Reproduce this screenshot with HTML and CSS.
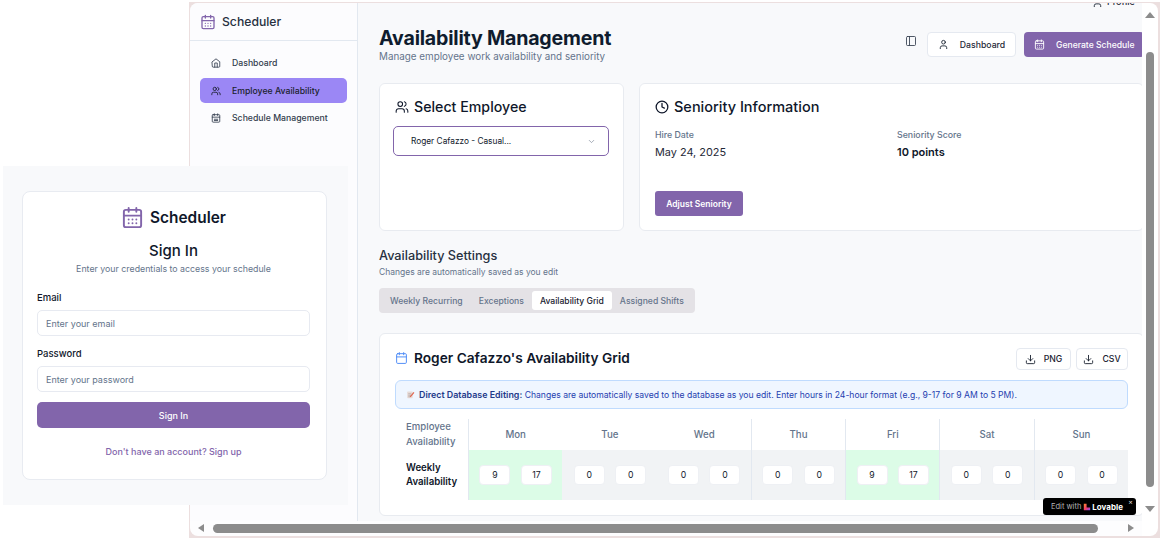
FILE: index.html
```html
<!DOCTYPE html>
<html lang="en">
<head>
<meta charset="utf-8">
<title>Scheduler</title>
<link rel="stylesheet" href="styles.css">
</head>
<body>
<svg class="sprite" aria-hidden="true">
  <symbol id="i-cal-days" viewBox="0 0 24 24"><rect x="3" y="4" width="18" height="18" rx="2"/><path d="M16 2v4M8 2v4M3 10h18M8 14h.01M12 14h.01M16 14h.01M8 18h.01M12 18h.01M16 18h.01"/></symbol>
  <symbol id="i-cal" viewBox="0 0 24 24"><rect x="3" y="4" width="18" height="18" rx="2"/><path d="M16 2v4M8 2v4M3 10h18"/></symbol>
  <symbol id="i-cal-lines" viewBox="0 0 24 24"><rect x="3" y="4" width="18" height="18" rx="2"/><path d="M16 2v4M8 2v4M3 10h18M8 15h8M8 18h8"/></symbol>
  <symbol id="i-home" viewBox="0 0 24 24"><path d="m3 9 9-7 9 7v11a2 2 0 0 1-2 2H5a2 2 0 0 1-2-2z"/><path d="M9 22V12h6v10"/></symbol>
  <symbol id="i-users" viewBox="0 0 24 24"><path d="M16 21v-2a4 4 0 0 0-4-4H6a4 4 0 0 0-4 4v2"/><circle cx="9" cy="7" r="4"/><path d="M22 21v-2a4 4 0 0 0-3-3.87M16 3.13a4 4 0 0 1 0 7.75"/></symbol>
  <symbol id="i-user" viewBox="0 0 24 24"><path d="M19 21v-2a4 4 0 0 0-4-4H9a4 4 0 0 0-4 4v2"/><circle cx="12" cy="7" r="4"/></symbol>
  <symbol id="i-panel" viewBox="0 0 24 24"><rect x="3" y="3" width="18" height="18" rx="2"/><path d="M9 3v18"/></symbol>
  <symbol id="i-download" viewBox="0 0 24 24"><path d="M21 15v4a2 2 0 0 1-2 2H5a2 2 0 0 1-2-2v-4"/><path d="m7 10 5 5 5-5M12 15V3"/></symbol>
  <symbol id="i-clock" viewBox="0 0 24 24"><circle cx="12" cy="12" r="10"/><path d="M12 6v6l4 2"/></symbol>
  <symbol id="i-chevron" viewBox="0 0 24 24"><path d="m6 9 6 6 6-6"/></symbol>
</svg>

<div class="app-window">
  <div class="app-body">
    <aside class="sidebar">
      <div class="brand">
        <svg class="icon brand-icon"><use href="#i-cal-days"/></svg>
        <span>Scheduler</span>
      </div>
      <nav class="nav">
        <a class="nav-item"><svg class="icon nav-icon"><use href="#i-home"/></svg>Dashboard</a>
        <a class="nav-item nav-item-active"><svg class="icon nav-icon"><use href="#i-users"/></svg>Employee Availability</a>
        <a class="nav-item"><svg class="icon nav-icon"><use href="#i-cal-lines"/></svg>Schedule Management</a>
      </nav>
    </aside>

    <main class="main">
      <div class="content">
        <div class="profile-row">
          <svg class="icon profile-icon"><use href="#i-user"/></svg>
          <span>Profile</span>
        </div>

        <header class="page-header">
          <div class="page-heading">
            <h1>Availability Management</h1>
            <p>Manage employee work availability and seniority</p>
          </div>
          <div class="header-actions">
            <svg class="icon panel-icon"><use href="#i-panel"/></svg>
            <button class="btn btn-outline btn-dash"><svg class="icon btn-icon"><use href="#i-user"/></svg>Dashboard</button>
            <button class="btn btn-primary btn-gen"><svg class="icon btn-icon"><use href="#i-cal-days"/></svg>Generate Schedule</button>
          </div>
        </header>

        <section class="cards">
          <div class="card card-select">
            <h2 class="card-title card-title-select"><svg class="icon title-icon"><use href="#i-users"/></svg>Select Employee</h2>
            <div class="select">
              <span>Roger Cafazzo - Casual...</span>
              <svg class="icon chevron"><use href="#i-chevron"/></svg>
            </div>
          </div>
          <div class="card card-seniority">
            <h2 class="card-title"><svg class="icon title-icon title-icon-clock"><use href="#i-clock"/></svg>Seniority Information</h2>
            <div class="facts">
              <div>
                <div class="fact-label">Hire Date</div>
                <div class="fact-value">May 24, 2025</div>
              </div>
              <div>
                <div class="fact-label">Seniority Score</div>
                <div class="fact-value fact-strong">10 points</div>
              </div>
            </div>
            <button class="btn btn-primary btn-adjust">Adjust Seniority</button>
          </div>
        </section>

        <section class="settings">
          <h3>Availability Settings</h3>
          <p>Changes are automatically saved as you edit</p>
          <div class="tabs">
            <span class="tab">Weekly Recurring</span>
            <span class="tab">Exceptions</span>
            <span class="tab tab-active">Availability Grid</span>
            <span class="tab">Assigned Shifts</span>
          </div>
        </section>

        <section class="card grid-card">
          <div class="grid-head">
            <h2 class="grid-title"><svg class="icon grid-title-icon"><use href="#i-cal"/></svg>Roger Cafazzo's Availability Grid</h2>
            <div class="grid-actions">
              <button class="btn btn-outline btn-export"><svg class="icon btn-icon"><use href="#i-download"/></svg>PNG</button>
              <button class="btn btn-outline btn-export"><svg class="icon btn-icon"><use href="#i-download"/></svg>CSV</button>
            </div>
          </div>
          <div class="notice">
            <svg class="memo" viewBox="0 0 12 12"><rect x="1.5" y="2" width="7.5" height="9" rx="1" fill="#e8dcd8"/><path d="M3 5h4M3 7h4M3 9h3" stroke="#a89a9a" stroke-width=".8"/><path d="M5.5 8 10 2.5l1.2 1L6.8 9 5 9.6z" fill="#e0654f"/></svg>
            <span><b>Direct Database Editing:</b> Changes are automatically saved to the database as you edit. Enter hours in 24-hour format (e.g., 9-17 for 9 AM to 5 PM).</span>
          </div>
          <div class="avail">
            <div class="avail-corner">Employee Availability</div>
            <div class="day">Mon</div>
            <div class="day day-plain">Tue</div>
            <div class="day day-plain">Wed</div>
            <div class="day">Thu</div>
            <div class="day">Fri</div>
            <div class="day">Sat</div>
            <div class="day">Sun</div>

            <div class="avail-label">Weekly Availability</div>
            <div class="slot slot-on"><span class="hour">9</span><span class="hour">17</span></div>
            <div class="slot slot-plain"><span class="hour">0</span><span class="hour">0</span></div>
            <div class="slot slot-plain"><span class="hour">0</span><span class="hour">0</span></div>
            <div class="slot"><span class="hour">0</span><span class="hour">0</span></div>
            <div class="slot slot-on"><span class="hour">9</span><span class="hour">17</span></div>
            <div class="slot"><span class="hour">0</span><span class="hour">0</span></div>
            <div class="slot"><span class="hour">0</span><span class="hour">0</span></div>
          </div>
        </section>
      </div>
    </main>
  </div>

  <div class="vscroll">
    <span class="arrow arrow-up"></span>
    <span class="vthumb"></span>
    <span class="arrow arrow-down"></span>
  </div>
  <div class="hscroll">
    <span class="arrow arrow-left"></span>
    <span class="hthumb"></span>
    <span class="arrow arrow-right"></span>
  </div>
  <div class="scroll-corner"></div>
</div>

<div class="badge">
  <span class="badge-edit">Edit with</span>
  <svg class="badge-logo" viewBox="0 0 10 10"><defs><linearGradient id="lov" x1="0" y1="0" x2="1" y2="1"><stop offset="0" stop-color="#ff8a2b"/><stop offset=".55" stop-color="#f0386b"/><stop offset="1" stop-color="#7a4dff"/></linearGradient></defs><path d="M1 1h3.5v4.5H9V9H1z" fill="url(#lov)"/></svg>
  <span class="badge-name">Lovable</span>
  <span class="badge-close">×</span>
</div>

<div class="login-window">
  <div class="login-card">
    <div class="login-brand">
      <svg class="icon login-logo"><use href="#i-cal-days"/></svg>
      <span>Scheduler</span>
    </div>
    <h2 class="login-title">Sign In</h2>
    <p class="login-sub">Enter your credentials to access your schedule</p>
    <div class="field">
      <div class="field-label">Email</div>
      <div class="field-input">Enter your email</div>
    </div>
    <div class="field">
      <div class="field-label">Password</div>
      <div class="field-input">Enter your password</div>
    </div>
    <button class="btn btn-primary btn-signin">Sign In</button>
    <a class="login-link">Don't have an account? Sign up</a>
  </div>
</div>
</body>
</html>
```
FILE: styles.css
```css
* { box-sizing: border-box; }
html, body { margin: 0; height: 100%; }
body {
  position: relative;
  width: 1162px;
  height: 538px;
  overflow: hidden;
  background: #fff;
  font-family: Inter, "Liberation Sans", sans-serif;
  color: #0f172a;
}
.sprite { display: none; }
h1, h2, h3, p { margin: 0; }
button { font-family: inherit; cursor: pointer; }

.icon {
  fill: none;
  stroke: currentColor;
  stroke-width: 2;
  stroke-linecap: round;
  stroke-linejoin: round;
  flex: none;
}

/* Desktop windows */
.app-window {
  position: absolute;
  left: 189px;
  top: 2px;
  width: 971px;
  height: 536px;
  background: #ecdfdf;
  padding: 1px 2px 2px 1px;
  display: grid;
  grid-template-columns: 952px 16px;
  grid-template-rows: 518px 15px;
}
.app-body {
  display: flex;
  overflow: hidden;
  background: #f8f9fb;
  border-top-left-radius: 8px;
}

/* Sidebar */
.sidebar {
  width: 168px;
  flex: none;
  background: #fcfcfe;
  border-right: 1px solid #e2e8f0;
}
.brand {
  height: 38px;
  display: flex;
  align-items: center;
  gap: 6px;
  padding-left: 10px;
  border-bottom: 1px solid #e2e8f0;
  font-size: 12.2px;
  font-weight: 500;
  color: #27303f;
}
.brand-icon { width: 16px; height: 16px; color: #8265ab; }
.nav {
  display: flex;
  flex-direction: column;
  gap: 2.5px;
  padding: 9.5px 10px;
}
.nav-item {
  height: 25px;
  display: flex;
  align-items: center;
  gap: 11px;
  padding-left: 11px;
  border-radius: 5px;
  font-size: 8.7px;
  font-weight: 500;
  color: #333c4d;
}
.nav-item-active { background: #9b87f5; color: #1a1f2c; }
.nav-icon { width: 10px; height: 10px; }

/* Main */
.main {
  flex: 1;
  min-width: 0;
  overflow: hidden;
  padding-left: 21px;
}
.content { width: 765px; }
.profile-row {
  height: 12px;
  margin-top: -8px;
  margin-bottom: 20px;
  padding-left: 713px;
  display: flex;
  align-items: center;
  gap: 4px;
  font-size: 9px;
  font-weight: 500;
  color: #1f2937;
}
.profile-icon { width: 11px; height: 11px; margin-top: 2px; }

.page-header {
  height: 56px;
  display: flex;
  justify-content: space-between;
  align-items: flex-start;
}
.page-heading h1 {
  font-size: 19.6px;
  line-height: 22px;
  font-weight: 700;
  letter-spacing: -.2px;
  color: #0f1c2e;
}
.page-heading p {
  font-size: 9.85px;
  line-height: 14px;
  color: #64748b;
}
.header-actions {
  display: flex;
  align-items: center;
  margin-top: 5px;
}
.panel-icon { width: 12px; height: 12px; margin-right: 10.5px; margin-top: -8px; color: #3c4656; stroke-width: 1.8; }

.btn {
  display: inline-flex;
  align-items: center;
  justify-content: center;
  border-radius: 4px;
  border: 1px solid transparent;
  font-size: 8.7px;
  font-weight: 500;
  padding: 0;
}
.btn-primary { background: #8265ab; color: #fff; }
.btn-outline { background: #fff; border-color: #e5e9f0; color: #1f2937; }
.btn-icon { width: 11px; height: 11px; }
.btn-dash { width: 89px; height: 25px; gap: 11px; margin-right: 8px; }
.btn-gen { width: 120px; height: 25px; gap: 11px; font-size: 8.6px; justify-content: flex-start; padding-left: 9px; }

/* Cards */
.card {
  background: #fff;
  border: 1px solid #e8ebf0;
  border-radius: 6px;
}
.cards {
  display: grid;
  grid-template-columns: 245px 505px;
  gap: 15px;
  height: 148px;
}
.card-select { padding: 13px 13px; }
.card-title {
  display: flex;
  align-items: center;
  gap: 5px;
  height: 19px;
  font-size: 14.2px;
  font-weight: 500;
  color: #0f172a;
}
.card-title-select { margin-left: 2px; }
.title-icon { width: 14px; height: 14px; stroke-width: 1.8; }
.title-icon-clock { width: 14px; height: 14px; stroke-width: 2.2; }
.select {
  margin-top: 10px;
  width: 216px;
  height: 30px;
  display: flex;
  align-items: center;
  justify-content: space-between;
  padding: 0 12px 0 17px;
  border: 1px solid #8265ab;
  border-radius: 5px;
  font-size: 8.3px;
  color: #0f172a;
}
.chevron { width: 9px; height: 9px; color: #8a93a2; }

.card-seniority { padding: 13px 15px; display: flex; flex-direction: column; }
.card-seniority .card-title { font-size: 14.5px; }
.facts {
  display: grid;
  grid-template-columns: 242px 1fr;
  margin-top: 13px;
}
.fact-label { font-size: 8.8px; line-height: 12px; font-weight: 500; color: #64748b; }
.fact-value { margin-top: 4px; font-size: 10.9px; line-height: 14px; color: #1f2937; }
.fact-strong { font-weight: 600; font-size: 11px; color: #0f172a; }
.btn-adjust { margin-top: 32px; width: 88px; height: 25px; font-weight: 600; font-size: 8.5px; border-radius: 3px; flex: none; }

/* Settings */
.settings { padding-top: 16px; }
.settings h3 { font-size: 12.7px; line-height: 18px; font-weight: 500; color: #27303f; }
.settings p { font-size: 8.5px; line-height: 14px; color: #64748b; }
.tabs {
  display: inline-flex;
  margin-top: 9px;
  height: 25px;
  padding: 3px;
  background: #e4e2e6;
  border-radius: 4px;
}
.tab {
  display: flex;
  align-items: center;
  padding: 0 8px;
  font-size: 8.6px;
  font-weight: 500;
  color: #64748b;
  border-radius: 3px;
}
.tab-active { background: #fff; color: #1a2230; }

/* Grid card */
.grid-card {
  margin-top: 20px;
  height: 183px;
  padding: 14px 15px;
  background: #fff;
}
.grid-head {
  display: flex;
  justify-content: space-between;
  align-items: center;
  height: 22px;
}
.grid-title {
  display: flex;
  align-items: center;
  gap: 6px;
  padding-bottom: 2px;
  font-size: 13.7px;
  font-weight: 600;
  color: #0f172a;
}
.grid-title-icon { width: 13px; height: 14px; color: #4f8df7; stroke-width: 1.8; }
.grid-actions { display: flex; gap: 5px; }
.btn-export { width: 55px; height: 22px; gap: 8px; border-radius: 4px; font-size: 8.7px; color: #1a2230; }
.btn-export + .btn-export { width: 52px; }

.notice {
  margin-top: 10px;
  height: 29px;
  display: flex;
  align-items: center;
  gap: 4px;
  padding-left: 10px;
  background: #eff6ff;
  border: 1px solid #bfdbfe;
  border-radius: 6px;
  font-size: 8.6px;
  color: #1e40af;
  white-space: nowrap;
}
.notice b { font-weight: 600; font-size: 8.9px; color: #1e3a8a; }
.memo { width: 9px; height: 9px; flex: none; }

.avail {
  margin-top: 10px;
  display: grid;
  grid-template-columns: 73px repeat(7, 1fr);
  grid-template-rows: 31px 50px;
}
.avail-corner {
  padding-left: 11px;
  display: flex;
  align-items: center;
  font-size: 9.6px;
  line-height: 14.5px;
  font-weight: 500;
  color: #64748b;
}
.avail-label {
  padding-left: 11px;
  display: flex;
  align-items: center;
  font-size: 9.7px;
  line-height: 14.5px;
  font-weight: 600;
  color: #0f172a;
}
.day {
  display: flex;
  align-items: center;
  justify-content: center;
  font-size: 9.7px;
  font-weight: 500;
  color: #64748b;
  border-left: 1px solid #e2e8f0;
}
.day-plain { border-left-color: transparent; }
.slot {
  display: flex;
  align-items: center;
  justify-content: center;
  gap: 10.5px;
  background: #f1f3f5;
  border-left: 1px solid #e2e8f0;
}
.slot-plain { border-left-color: transparent; }
.slot-on { background: #dcfce7; }
.hour {
  width: 31px;
  height: 20px;
  display: flex;
  align-items: center;
  justify-content: center;
  background: #fff;
  border: 1px solid #eef0f4;
  border-radius: 4px;
  font-size: 8.7px;
  color: #0f172a;
}

/* Scrollbars */
.vscroll {
  position: relative;
  background: #fff;
  border-top-right-radius: 8px;
}
.hscroll {
  position: relative;
  background: #fdfdfe;
  border-bottom-left-radius: 8px;
}
.scroll-corner { background: #fff; border-bottom-right-radius: 8px; }
.arrow { position: absolute; width: 0; height: 0; border-style: solid; border-color: transparent; }
.arrow-up { left: 3px; top: 9px; border-width: 0 5px 6px; border-bottom-color: #8c8c8c; }
.arrow-down { left: 3px; top: 503px; border-width: 6px 5px 0; border-top-color: #8c8c8c; }
.arrow-left { left: 8px; top: 3px; border-width: 4px 6px 4px 0; border-right-color: #8c8c8c; }
.arrow-right { left: 938px; top: 3px; border-width: 4px 0 4px 6px; border-left-color: #8c8c8c; }
.vthumb { position: absolute; left: 4px; top: 49px; width: 8px; height: 435px; border-radius: 4px; background: #8c8c8c; }
.hthumb { position: absolute; left: 23px; top: 3px; width: 885px; height: 9px; border-radius: 4.5px; background: #8c8c8c; }

/* Overlay badge */
.badge {
  position: absolute;
  left: 1043px;
  top: 498px;
  width: 93px;
  height: 17px;
  display: flex;
  align-items: center;
  padding-left: 8px;
  background: #000;
  border-radius: 3px;
  font-size: 7.5px;
  white-space: nowrap;
}
.badge-edit { color: #b5b5b5; }
.badge-logo { width: 8px; height: 8px; margin: 0 1px 0 2px; }
.badge-name { color: #fff; font-weight: 700; font-size: 8px; }
.badge-close { position: absolute; right: 3px; top: 0; color: #ddd; font-size: 7px; line-height: 8px; }

/* Login window */
.login-window {
  position: absolute;
  left: 3px;
  top: 166px;
  width: 345px;
  height: 339px;
  padding: 25px 19px;
  background: #f8f9fb;
}
.login-card {
  width: 305px;
  height: 289px;
  padding: 15px 16px 0 14px;
  display: flex;
  flex-direction: column;
  align-items: stretch;
  background: #fff;
  border: 1px solid #e8ebf1;
  border-radius: 8px;
}
.login-brand {
  height: 21px;
  display: flex;
  align-items: center;
  justify-content: center;
  gap: 6px;
  font-size: 15.4px;
  font-weight: 600;
  color: #0f172a;
}
.login-logo { width: 23px; height: 23px; color: #8265ab; }
.login-title {
  margin-top: 13px;
  text-align: center;
  font-size: 15px;
  line-height: 20px;
  font-weight: 500;
  color: #0f172a;
}
.login-sub {
  margin-top: 1px;
  text-align: center;
  font-size: 8.8px;
  line-height: 14px;
  color: #64748b;
}
.field { margin-top: 15px; }
.field + .field { margin-top: 11px; }
.field-label { font-size: 9.5px; line-height: 14px; font-weight: 500; color: #0f172a; height: 19px; }
.field-input {
  height: 26px;
  display: flex;
  align-items: center;
  padding-left: 8px;
  background: #fff;
  border: 1px solid #e7eaf1;
  border-radius: 5px;
  font-size: 9px;
  color: #64748b;
}
.btn-signin { margin-top: 10px; height: 26px; font-size: 9px; font-weight: 500; border-radius: 5px; flex: none; }
.login-link {
  margin-top: 17px;
  text-align: center;
  font-size: 9px;
  line-height: 14px;
  font-weight: 500;
  color: #8265ab;
}
```
